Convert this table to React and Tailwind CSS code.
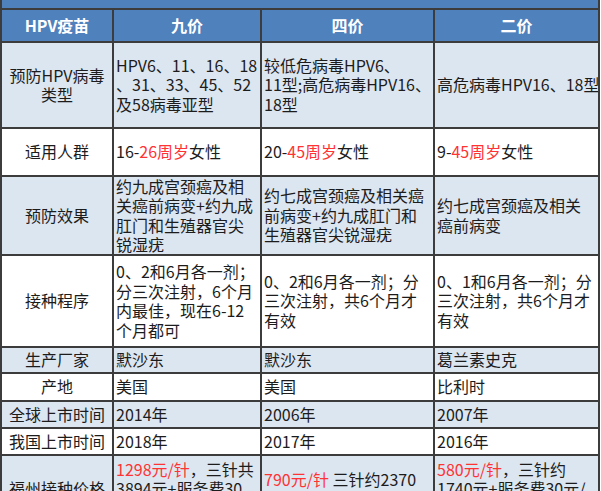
const light = "bg-[#dce6f1]";
const white = "bg-white";

const rows = [
  {
    bg: light,
    label: ["预防HPV病毒", "类型"],
    cells: [
      ["HPV6、11、16、18", "、31、33、45、52", "及58病毒亚型"],
      ["较低危病毒HPV6、", "11型;高危病毒HPV16、", "18型"],
      ["高危病毒HPV16、18型"],
    ],
  },
  {
    bg: white,
    label: ["适用人群"],
    cells: [
      [["16-", "26周岁", "女性"]],
      [["20-", "45周岁", "女性"]],
      [["9-", "45周岁", "女性"]],
    ],
  },
  {
    bg: light,
    label: ["预防效果"],
    cells: [
      ["约九成宫颈癌及相", "关癌前病变+约九成", "肛门和生殖器官尖", "锐湿疣"],
      ["约七成宫颈癌及相关癌", "前病变+约九成肛门和", "生殖器官尖锐湿疣"],
      ["约七成宫颈癌及相关", "癌前病变"],
    ],
  },
  {
    bg: white,
    label: ["接种程序"],
    cells: [
      ["0、2和6月各一剂；", "分三次注射，6个月", "内最佳，现在6-12", "个月都可"],
      ["0、2和6月各一剂；分", "三次注射，共6个月才", "有效"],
      ["0、1和6月各一剂；分", "三次注射，共6个月才", "有效"],
    ],
  },
  { bg: light, label: ["生产厂家"], cells: [["默沙东"], ["默沙东"], ["葛兰素史克"]] },
  { bg: white, label: ["产地"], cells: [["美国"], ["美国"], ["比利时"]] },
  { bg: light, label: ["全球上市时间"], cells: [["2014年"], ["2006年"], ["2007年"]] },
  { bg: white, label: ["我国上市时间"], cells: [["2018年"], ["2017年"], ["2016年"]] },
  {
    bg: light,
    label: ["福州接种价格"],
    cells: [
      [["", "1298元/针", "，三针共"], "3894元+服务费30", "元/针，共3984元"],
      [["", "790元/针", " 三针约2370"], "元+服务费30元/针"],
      [["", "580元/针", "，三针约"], "1740元+服务费30元/", "针，共1830元"],
    ],
  },
];

function Line({ line }) {
  if (typeof line === "string") return <div className="whitespace-nowrap">{line}</div>;
  const [a, red, b] = line;
  return (
    <div className="whitespace-nowrap">
      {a}
      <span className="text-[#ff3333]">{red}</span>
      {b}
    </div>
  );
}

export default function App() {
  return (
    <div
      className="w-[601px] bg-white text-[16px] leading-[19.5px] text-[#1c1c1c]"
      style={{ fontFamily: '"Noto Sans CJK SC", "Noto Sans", sans-serif' }}
    >
      <div className="h-[8px] w-[600px] border-x-2 border-[#3c3c3c] bg-[#4f81bd]" />
      <div className="grid w-[600px] grid-cols-[110px_146px_171px_163px] grid-rows-[31px_84px_46px_77px_90px_24px_26px_25px_25px_66px] gap-[2px] bg-[#3c3c3c] p-[2px]">
        <div className="flex items-center justify-center bg-[#4f81bd] font-bold text-white">HPV疫苗</div>
        <div className="flex items-center justify-center bg-[#4f81bd] font-bold text-white">九价</div>
        <div className="flex items-center justify-center bg-[#4f81bd] font-bold text-white">四价</div>
        <div className="flex items-center justify-center bg-[#4f81bd] font-bold text-white">二价</div>
        {rows.map((row, i) => (
          <Row key={i} row={row} />
        ))}
      </div>
    </div>
  );
}

function Row({ row }) {
  return (
    <>
      <div className={`flex flex-col items-center justify-center overflow-hidden text-center ${row.bg}`}>
        {row.label.map((l, i) => (
          <div key={i} className="whitespace-nowrap">{l}</div>
        ))}
      </div>
      {row.cells.map((lines, j) => (
        <div key={j} className={`flex flex-col justify-center overflow-hidden pl-[2px] ${row.bg}`}>
          {lines.map((line, k) => (
            <Line key={k} line={line} />
          ))}
        </div>
      ))}
    </>
  );
}
